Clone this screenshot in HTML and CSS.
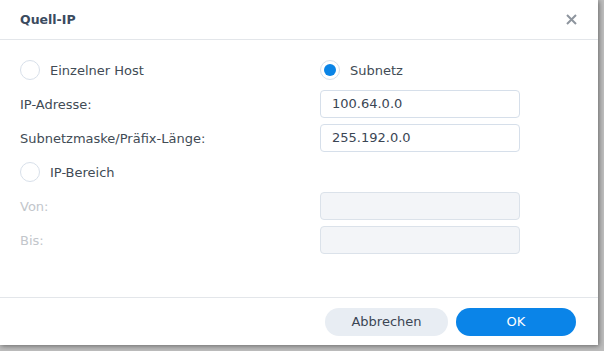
FILE: index.html
```html
<!DOCTYPE html>
<html lang="de">
<head>
    <meta charset="UTF-8">
    <meta name="viewport" content="width=device-width, initial-scale=1.0">
    <title>Quell-IP</title>
    <link rel="stylesheet" href="styles.css">
</head>
<body>
    <div class="dialog">
        <div class="dialog-header">
            <span class="dialog-title">Quell-IP</span>
            <span class="close-btn">
                <svg width="11" height="11" viewBox="0 0 11 11">
                    <path d="M1 1 L10 10 M10 1 L1 10" stroke="#8e959e" stroke-width="2" fill="none"/>
                </svg>
            </span>
        </div>
        <div class="dialog-body">
            <div class="row">
                <label class="radio"><span class="radio-dot"></span>Einzelner Host</label>
                <label class="radio"><span class="radio-dot checked"></span>Subnetz</label>
            </div>
            <div class="row">
                <span class="field-label">IP-Adresse:</span>
                <div class="input">100.64.0.0</div>
            </div>
            <div class="row">
                <span class="field-label">Subnetzmaske/Präfix-Länge:</span>
                <div class="input">255.192.0.0</div>
            </div>
            <div class="row">
                <label class="radio"><span class="radio-dot"></span>IP-Bereich</label>
            </div>
            <div class="row">
                <span class="field-label disabled">Von:</span>
                <div class="input disabled"></div>
            </div>
            <div class="row">
                <span class="field-label disabled">Bis:</span>
                <div class="input disabled"></div>
            </div>
        </div>
        <div class="dialog-footer">
            <button class="btn btn-cancel">Abbrechen</button>
            <button class="btn btn-ok">OK</button>
        </div>
    </div>
</body>
</html>
```

FILE: styles.css
```css
body {
    margin: 0;
    width: 604px;
    height: 351px;
    background-color: #bdbdbd;
    font-family: 'DejaVu Sans', sans-serif;
    font-size: 13px;
    color: #414b55;
    overflow: hidden;
}
.dialog {
    width: 598px;
    height: 345px;
    background-color: #fff;
    box-shadow: 1px 1px 5px rgba(0, 0, 0, 0.45);
    display: flex;
    flex-direction: column;
}
.dialog-header {
    height: 39px;
    border-bottom: 1px solid #e3e6ea;
    display: flex;
    align-items: center;
    justify-content: space-between;
    padding: 0 20px;
}
.dialog-title {
    font-weight: bold;
    font-size: 12.5px;
    color: #3b4b5f;
}
.close-btn {
    display: flex;
    margin-right: 1px;
}
.dialog-body {
    flex: 1;
    padding: 16px 20px 0 20px;
    display: flex;
    flex-direction: column;
    gap: 6px;
}
.row {
    height: 28px;
    display: grid;
    grid-template-columns: 300px 200px;
    align-items: center;
}
.radio {
    display: flex;
    align-items: center;
    gap: 10px;
}
.radio-dot {
    width: 18px;
    height: 18px;
    border: 1px solid #d8e0ea;
    border-radius: 50%;
    display: flex;
    align-items: center;
    justify-content: center;
}
.radio-dot.checked::after {
    content: '';
    width: 12px;
    height: 12px;
    border-radius: 50%;
    background-color: #0a84e6;
}
.field-label.disabled {
    color: #c2c6cb;
}
.input {
    height: 26px;
    border: 1px solid #d6dfea;
    border-radius: 4px;
    padding: 0 11px;
    line-height: 26px;
    color: #3b4654;
}
.input.disabled {
    background-color: #f3f5f8;
    border-color: #dbe2ea;
}
.dialog-footer {
    height: 47px;
    border-top: 1px solid #e3e6ea;
    display: flex;
    justify-content: flex-end;
    align-items: center;
    gap: 8px;
    padding: 0 22px 0 0;
}
.btn {
    height: 28px;
    border: none;
    border-radius: 14px;
    font-family: inherit;
    font-size: 13px;
    cursor: pointer;
}
.btn-cancel {
    width: 123px;
    background-color: #e8edf3;
    color: #3b4654;
}
.btn-ok {
    width: 120px;
    background-color: #0a84e8;
    color: #fff;
}
```
